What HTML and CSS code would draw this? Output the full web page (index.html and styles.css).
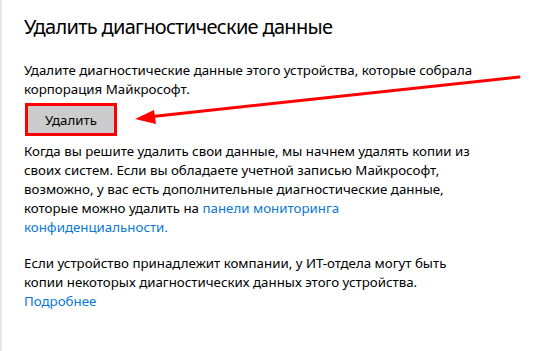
FILE: index.html
```html
<!DOCTYPE html>
<html lang="ru">
<head>
<meta charset="utf-8">
<link rel="stylesheet" href="styles.css">
</head>
<body>
<div class="page">
  <h1 class="title">Удалить диагностические данные</h1>
  <p class="text intro">Удалите диагностические данные этого устройства, которые собрала корпорация Майкрософт.</p>
  <div class="btn-frame"><button class="btn">Удалить</button></div>
  <p class="text">Когда вы решите удалить свои данные, мы начнем удалять копии из своих систем. Если вы обладаете учетной записью Майкрософт, возможно, у вас есть дополнительные диагностические данные, которые можно удалить на <span class="link">панели мониторинга</span> <span class="link">конфиденциальности.</span></p>
  <p class="text last">Если устройство принадлежит компании, у ИТ-отдела могут быть копии некоторых диагностических данных этого устройства.<br><span class="link">Подробнее</span></p>
  <svg class="arrow" width="538" height="351" viewBox="0 0 538 351">
    <line x1="517" y1="77" x2="146" y2="117" stroke="#ff0000" stroke-width="3" stroke-linecap="round"/>
    <polygon points="133,119 152,110 154,124" fill="#ff0000"/>
  </svg>
</div>
</body>
</html>
```
FILE: styles.css
```css
html, body {
  margin: 0;
  padding: 0;
  background: #ffffff;
}
.page {
  position: relative;
  width: 538px;
  height: 351px;
  box-sizing: border-box;
  border-left: 2px solid #e6e6e6;
  padding: 13px 0 0 22px;
  font-family: "Noto Sans", "Open Sans", sans-serif;
  color: #000;
  overflow: hidden;
}
.title {
  margin: 0;
  font-size: 20px;
  font-weight: 400;
  letter-spacing: -0.7px;
  line-height: 28px;
  color: #000;
}
.text {
  margin: 0;
  font-size: 13.3px;
  line-height: 19px;
  width: 460px;
}
.intro {
  margin-top: 20px;
}
.btn-frame {
  display: inline-block;
  margin: 4px 0 0 1px;
  border: 3px solid #ff0000;
}
.btn {
  display: block;
  width: 86px;
  height: 27px;
  border: 0;
  margin: 0;
  padding: 0;
  background: #cccccc;
  font-family: inherit;
  font-size: 13.3px;
  color: #000;
}
.btn-frame + .text {
  margin-top: 6px;
}
.last {
  margin-top: 17px;
}
.link {
  color: #0a78d4;
}
.arrow {
  position: absolute;
  left: 0;
  top: 0;
  pointer-events: none;
}
```
